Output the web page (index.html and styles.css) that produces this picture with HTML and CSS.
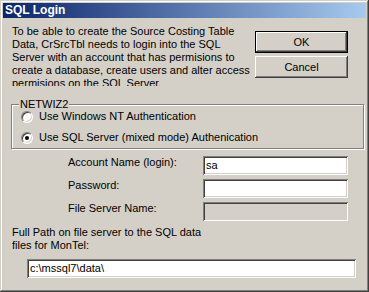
FILE: index.html
```html
<!DOCTYPE html>
<html lang="en">
<head>
    <meta charset="UTF-8">
    <meta name="viewport" content="width=device-width, initial-scale=1.0">
    <title>SQL Login</title>
    <link rel="stylesheet" href="styles.css">
</head>
<body>
    <div class="window">
        <div class="titlebar">SQL Login</div>

        <div class="top">
            <p class="intro">
                To be able to create the Source Costing Table<br>
                Data, CrSrcTbl needs to login into the SQL<br>
                Server with an account that has permisions to<br>
                create a database, create users and alter access<br>
                permisions on the SQL Server.
            </p>
            <div class="buttons">
                <button class="btn btn-default">OK</button>
                <button class="btn">Cancel</button>
            </div>
        </div>

        <div class="group">
            <span class="group-title">NETWIZ2</span>
            <div class="radio-row">
                <span class="radio"></span>
                <span>Use Windows NT Authentication</span>
            </div>
            <div class="radio-row">
                <span class="radio checked"></span>
                <span>Use SQL Server (mixed mode) Authenication</span>
            </div>
        </div>

        <div class="fields">
            <div class="field-label">Account Name (login):</div>
            <div class="edit">sa</div>
            <div class="field-label">Password:</div>
            <div class="edit"></div>
            <div class="field-label">File Server Name:</div>
            <div class="edit disabled"></div>
        </div>

        <p class="path-note">
            Full Path on file server to the SQL data<br>
            files for MonTel:
        </p>
        <div class="edit path-edit">c:\mssql7\data\</div>
    </div>
</body>
</html>
```

FILE: styles.css
```css
body {
    margin: 0;
}

.window {
    width: 369px;
    height: 292px;
    box-sizing: border-box;
    padding: 3px;
    background-color: #d4d0c8;
    box-shadow: inset -1px -1px #404040, inset 1px 1px #d4d0c8,
                inset -2px -2px #808080, inset 2px 2px #ffffff;
    font-family: "Liberation Sans", Arial, sans-serif;
    font-size: 11px;
    line-height: 13px;
    color: #000;
    overflow: hidden;
}

.titlebar {
    height: 15px;
    line-height: 15px;
    padding-left: 2px;
    background: linear-gradient(to right, #0a246a, #a6caf0);
    color: #fff;
    font-size: 12px;
    font-weight: bold;
}

/* intro text + OK / Cancel */
.top {
    display: flex;
    margin-top: 7px;
    padding-left: 9px;
    padding-right: 18px;
}
.intro {
    margin: 0;
    width: 240px;
    height: 61px;
    white-space: nowrap;
    overflow: hidden;
}
.buttons {
    margin-left: auto;
    display: flex;
    flex-direction: column;
    gap: 3px;
    padding-top: 6px;
}
.btn {
    width: 93px;
    height: 22px;
    padding: 0;
    border: none;
    background-color: #d4d0c8;
    font: inherit;
    color: #000;
    box-shadow: inset -1px -1px #404040, inset 1px 1px #ffffff,
                inset -2px -2px #808080, inset 2px 2px #d4d0c8;
}
.btn-default {
    border: 1px solid #000;
}

/* group box */
.group {
    position: relative;
    width: 353px;
    box-sizing: border-box;
    margin: 18px 0 0 8px;
    padding: 5px 0 4px 9px;
    border: 1px solid #808080;
    box-shadow: inset 1px 1px #fff, 1px 1px #fff;
    display: flex;
    flex-direction: column;
    gap: 8px;
}
.group-title {
    position: absolute;
    top: -7px;
    left: 7px;
    padding: 0 1px;
    background-color: #d4d0c8;
}
.radio-row {
    display: flex;
    align-items: center;
    gap: 6px;
    height: 13px;
}
.radio {
    width: 12px;
    height: 12px;
    box-sizing: border-box;
    border-radius: 50%;
    border: 1px solid;
    border-color: #808080 #ffffff #ffffff #808080;
    box-shadow: inset 1px 1px #404040, inset -1px -1px #d4d0c8;
    background-color: #fff;
    display: flex;
    align-items: center;
    justify-content: center;
}
.radio.checked::after {
    content: "";
    width: 4px;
    height: 4px;
    border-radius: 50%;
    background-color: #000;
}

/* login fields */
.fields {
    display: grid;
    grid-template-columns: 135px 145px;
    grid-auto-rows: 19px;
    row-gap: 4px;
    margin: 7px 0 0 65px;
}
.field-label {
    align-self: start;
}
.edit {
    box-sizing: border-box;
    height: 19px;
    padding: 3px 0 0 3px;
    background-color: #fff;
    box-shadow: inset 1px 1px #808080, inset -1px -1px #ffffff,
                inset 2px 2px #404040, inset -2px -2px #d4d0c8;
    white-space: nowrap;
}
.edit.disabled {
    background-color: #d4d0c8;
}

.path-note {
    margin: 5px 0 0 9px;
}
.path-edit {
    width: 329px;
    margin: 7px 0 0 24px;
}
```
